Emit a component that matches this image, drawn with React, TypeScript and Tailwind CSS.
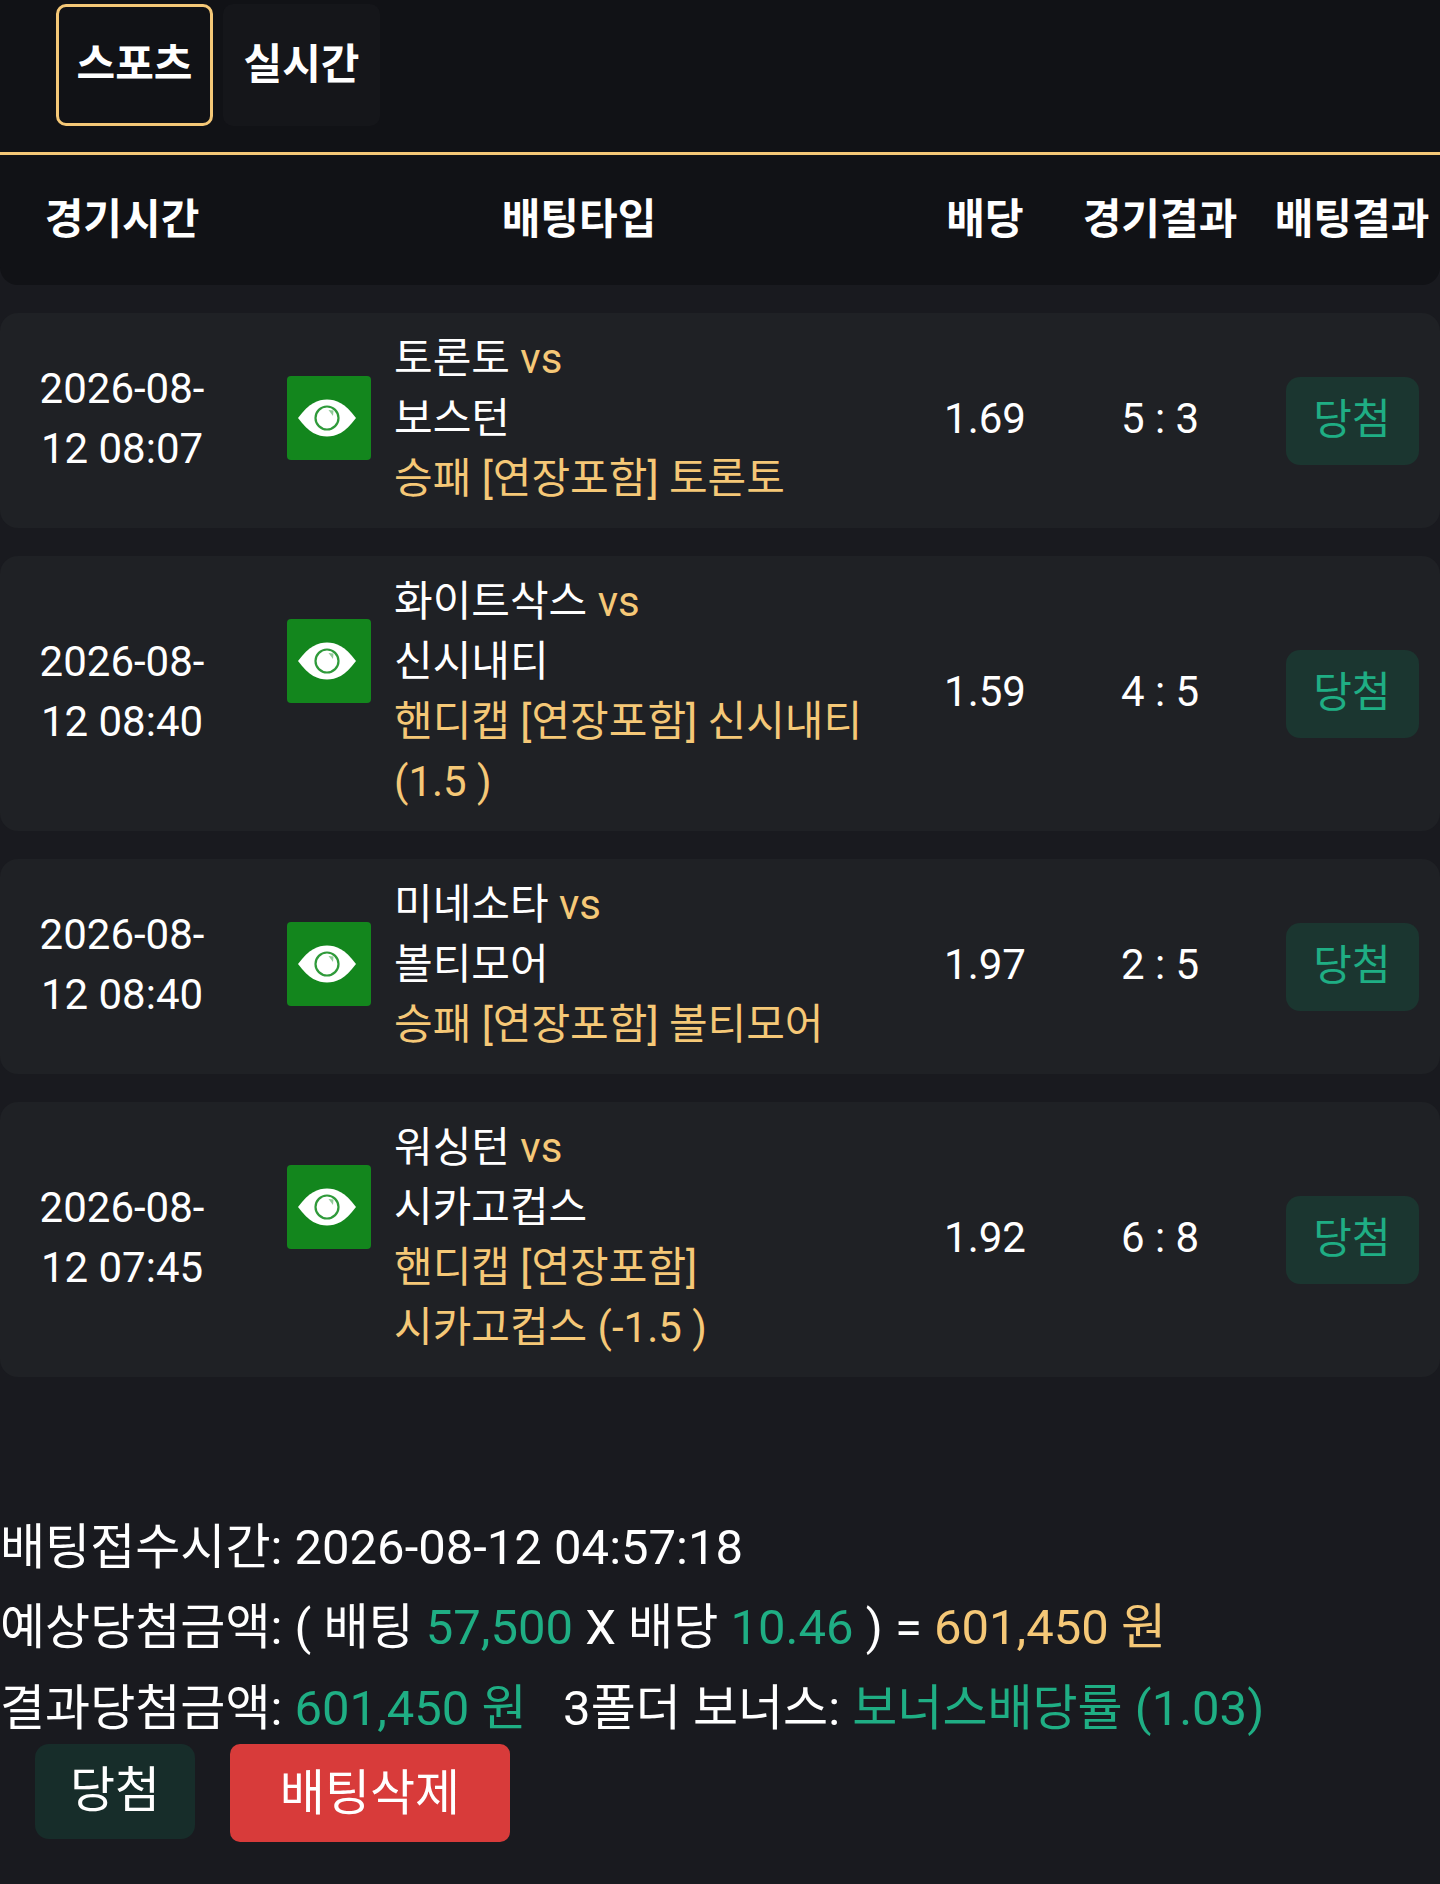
const font = { fontFamily: '"Roboto","Noto Sans CJK KR",sans-serif' };

function Eye() {
  return (
    <div className="mt-[47px] flex h-[84px] w-[84px] shrink-0 items-center justify-center rounded-[4px] bg-[#13861d] pr-[4px]">
      <svg width="64" height="44" viewBox="0 0 64 44">
        <path d="M3 22 C14 7 23 3.500 32 3.500 C41 3.500 50 7 61 22 C50 37 41 40.500 32 40.500 C23 40.500 14 37 3 22 Z" fill="#ffffff" />
        <circle cx="32" cy="22" r="11.500" fill="none" stroke="#2f9a3a" strokeWidth="2.200" />
        <circle cx="32" cy="22" r="8" fill="#ffffff" />
        <path d="M33.500 14 L38.500 14.500 L38 20 Z" fill="#8fc997" />
      </svg>
    </div>
  );
}

type Row = { date: string; team1: string; team2: string; bet: string; odds: string; score: string };

const rows: Row[] = [
  { date: "2026-08-12 08:07", team1: "토론토", team2: "보스턴", bet: "승패 [연장포함] 토론토", odds: "1.69", score: "5 : 3" },
  { date: "2026-08-12 08:40", team1: "화이트삭스", team2: "신시내티", bet: "핸디캡 [연장포함] 신시내티 (1.5 )", odds: "1.59", score: "4 : 5" },
  { date: "2026-08-12 08:40", team1: "미네소타", team2: "볼티모어", bet: "승패 [연장포함] 볼티모어", odds: "1.97", score: "2 : 5" },
  { date: "2026-08-12 07:45", team1: "워싱턴", team2: "시카고컵스", bet: "핸디캡 [연장포함] 시카고컵스 (-1.5 )", odds: "1.92", score: "6 : 8" },
];

const grid = "grid grid-cols-[244px_670px_142px_208px_176px]";

export default function App() {
  return (
    <div style={font} className="min-h-[1884px] w-[1440px] bg-[#191a1f] text-[42px] leading-[60px] text-white">
      <div className="flex h-[155px] gap-[10px] border-b-[3px] border-[#f5c877] bg-[#111216] pl-[56px] pt-[4px]">
        <div className="h-[122px] w-[157px] rounded-[10px] border-[3px] border-[#f5c877] pt-[28px] text-center font-bold">스포츠</div>
        <div className="h-[122px] w-[157px] rounded-[10px] bg-[#15161a] pt-[31px] text-center font-bold">실시간</div>
      </div>

      <div className={`${grid} h-[130px] items-center rounded-b-[18px] bg-[#111216] pb-[1px] text-center font-bold`}>
        <div>경기시간</div>
        <div>배팅타입</div>
        <div>배당</div>
        <div>경기결과</div>
        <div>배팅결과</div>
      </div>

      <div className="mt-[28px] flex flex-col gap-[28px]">
        {rows.map((r, i) => (
          <div key={i} className={`${grid} items-center rounded-[18px] bg-[#1f2125]`}>
            <div className="px-[28px] pb-[4px] text-center">{r.date}</div>
            <div className="flex items-start gap-[23px] self-start pb-[19.500px] pl-[43px] pr-[30px] pt-[15.500px]">
              <Eye />
              <div className="min-w-0 break-keep">
                <div>
                  {r.team1} <span className="text-[#f5c877]">vs</span>
                </div>
                <div>{r.team2}</div>
                <div className="text-[#f5c877]">{r.bet}</div>
              </div>
            </div>
            <div className="pb-[4px] text-center">{r.odds}</div>
            <div className="pb-[4px] text-center">{r.score}</div>
            <div className="flex justify-center">
              <div className="flex h-[88px] w-[133px] items-center justify-center rounded-[14px] bg-[#1b3630] pb-[2px] text-[#1fae84]">당첨</div>
            </div>
          </div>
        ))}
      </div>

      <div className="mt-[130.500px] text-[49px] leading-[80.500px]">
        <div>배팅접수시간: 2026-08-12 04:57:18</div>
        <div>
          예상당첨금액: ( 배팅 <span className="text-[#1fae84]">57,500</span> X 배당 <span className="text-[#1fae84]">10.46</span> ) = <span className="text-[#f5c877]">601,450 원</span>
        </div>
        <div>
          결과당첨금액: <span className="text-[#1fae84]">601,450 원</span>
          {"\u00a0\u00a0\u00a0"}3폴더 보너스: <span className="text-[#1fae84]">보너스배당률 (1.03)</span>
        </div>
      </div>

      <div className="-mt-[5px] flex items-start gap-[35px] pl-[35px] text-[49px]">
        <div className="flex h-[95px] w-[160px] items-center justify-center rounded-[14px] bg-[#172d2a] pb-[2px]">당첨</div>
        <div className="flex h-[98px] w-[280px] items-center justify-center rounded-[10px] bg-[#d83b3a] pt-[1px]">배팅삭제</div>
      </div>
    </div>
  );
}
